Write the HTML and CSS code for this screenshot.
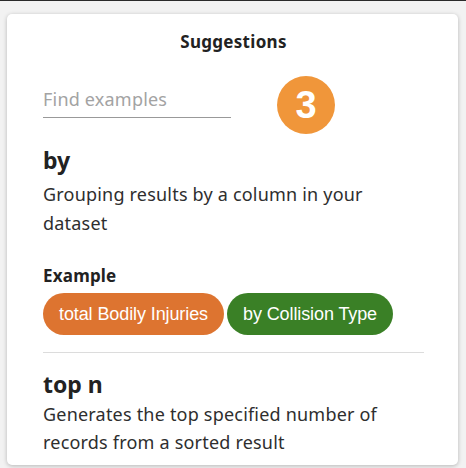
FILE: index.html
```html
<!DOCTYPE html>
<html>
<head>
<meta charset="utf-8">
<link rel="stylesheet" href="styles.css">
</head>
<body>
<div class="card">
  <div class="title">Suggestions</div>
  <div class="search-row">
    <div class="search">Find examples</div>
    <div class="badge">3</div>
  </div>
  <div class="item">
    <div class="keyword">by</div>
    <div class="desc">Grouping results by a column in your dataset</div>
    <div class="example-label">Example</div>
    <div class="chips">
      <span class="chip chip-orange">total Bodily Injuries</span>
      <span class="chip chip-green">by Collision Type</span>
    </div>
  </div>
  <div class="divider"></div>
  <div class="item item-last">
    <div class="keyword">top n</div>
    <div class="desc">Generates the top specified number of records from a sorted result</div>
  </div>
</div>
</body>
</html>
```
FILE: styles.css
```css
html, body {
  margin: 0;
  padding: 0;
}
body {
  background: #f2f2f2;
  border-top: 1px solid #2a2a2a;
  height: 467px;
  overflow: hidden;
  font-family: "Noto Sans", "Open Sans", sans-serif;
  color: #2b2b2b;
}
.card {
  margin: 13px 8px 0 7px;
  height: 451px;
  box-sizing: border-box;
  background: #fff;
  border-radius: 5px;
  box-shadow: 0 1px 4px rgba(0,0,0,0.25);
  padding: 16px 34px 0 36px;
  overflow: hidden;
}
.title {
  text-align: center;
  font-weight: 700;
  font-size: 17px;
  letter-spacing: 0.3px;
  line-height: 24px;
  color: #222;
}
.search-row {
  display: flex;
  align-items: flex-start;
  margin-top: 22px;
}
.search {
  width: 188px;
  height: 30px;
  margin-top: 12px;
  box-sizing: border-box;
  border-bottom: 1px solid #999;
  font-size: 18px;
  letter-spacing: 0.2px;
  line-height: 22px;
  color: #a3a3a3;
}
.badge {
  width: 58px;
  height: 58px;
  margin-left: 46px;
  border-radius: 50%;
  background: #f0963a;
  color: #fff;
  font-family: "Liberation Sans", Arial, sans-serif;
  font-weight: 700;
  font-size: 38px;
  line-height: 58px;
  text-align: center;
}
.keyword {
  font-weight: 700;
  font-size: 23px;
  line-height: 30px;
  color: #222;
  margin-top: 11px;
}
.desc {
  font-size: 18px;
  letter-spacing: 0.2px;
  line-height: 29px;
  margin-top: 5px;
  width: 350px;
  color: #2e2e2e;
}
.item-last .keyword {
  margin-top: 16px;
}
.item-last .desc {
  line-height: 28px;
  margin-top: 1px;
}
.example-label {
  font-weight: 700;
  font-size: 17px;
  letter-spacing: 0.2px;
  line-height: 24px;
  margin-top: 26px;
  color: #222;
}
.chips {
  display: flex;
  gap: 3px;
  margin-top: 5px;
}
.chip {
  height: 42px;
  line-height: 42px;
  border-radius: 21px;
  padding: 0 16px;
  font-family: "Liberation Sans", Arial, sans-serif;
  font-size: 18px;
  letter-spacing: -0.1px;
  color: #fff;
}
.chip-orange {
  background: #dd7430;
}
.chip-green {
  background: #3a8026;
}
.divider {
  height: 1px;
  background: #dcdcdc;
  margin-top: 17px;
}
```
